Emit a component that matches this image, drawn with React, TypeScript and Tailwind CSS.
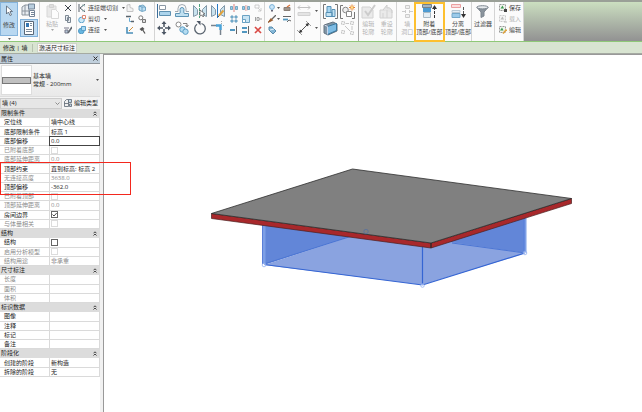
import { ReactNode } from 'react'
import clsx from 'clsx'

interface IconProps {
    w?: number
    h?: number
    faded?: boolean
    children: ReactNode
}

function Icon({ w = 14, h = 14, faded, children }: IconProps) {
    return (
        <svg width={w} height={h} viewBox={`0 0 ${w} ${h}`} fill="none" stroke="#5b6672" className={clsx('shrink-0', faded && 'opacity-35')} aria-hidden="true">
            {children}
        </svg>
    )
}

function Caret() {
    return (
        <svg width="3" height="2" viewBox="0 0 3 2" className="shrink-0" aria-hidden="true">
            <path d="M0 0h3L1.5 2z" fill="#555" />
        </svg>
    )
}

/* large icons, 14px */

const CursorIcon = () => <Icon w={8} h={12}><path d="M1.5 1v8l2-2 1.5 3.5 1.5-.6L5 6.5h2.5z" fill="#fff" stroke="#53606e" strokeWidth=".8" /></Icon>

const TypePropsIcon = () => (
    <Icon w={15} h={15}>
        <path d="M1 4l3-2h4v10H1zM1 8h7M4 2v10" fill="#e8edf2" stroke="#8b949d" />
        <path d="M7.5 1h6v5h-6z" fill="#b9cede" stroke="#758598" />
        <path d="M8.5 7.5h5v6h-5zM10 9.5h3M10 11.5h3" fill="#fff" stroke="#758598" />
    </Icon>
)

const PaletteIcon = () => (
    <Icon w={12} h={14}>
        <path d="M1.5.5h9v13h-9z" fill="#fff" stroke="#586777" />
        <path d="M3 2h3v4H3z" fill="#3476b3" stroke="none" />
        <path d="M7 2.500h2M7 4.500h2M3 8.500h6M3 10.500h6" stroke="#7c8a98" />
    </Icon>
)

const PasteIcon = () => (
    <Icon w={13} h={15} faded>
        <path d="M1 2h9v11H1z" fill="#c8c8c8" stroke="#999" />
        <path d="M3.5.5h4v3h-4z" fill="#aaa" stroke="#888" />
        <path d="M5.5 5.5h4l3 3v6h-7z" fill="#fff" stroke="#999" />
    </Icon>
)

const AlignIcon = () => (
    <Icon>
        <path d="M.5 0v14" stroke="#3c6e99" />
        <path d="M2.5 1.5h6v4h-6z" fill="#fff" stroke="#8b98a5" />
        <path d="M2.5 7.5h11v4h-11z" fill="#acd4ec" stroke="#5e90b0" />
    </Icon>
)

const OffsetIcon = () => (
    <Icon>
        <path d="M.5 9.500h3.500c2 0 1-2 1-4a2 2 0 0 1 4 0c0 2-1 4 1 4h3.500v3H.5z" fill="#bfe0f1" stroke="#5d94b5" />
        <path d="M0 7.500h3V4.500a3.500 3.500 0 0 1 8 0v3h3" stroke="#7d8892" strokeWidth=".7" />
    </Icon>
)

const MirrorPickIcon = () => (
    <Icon>
        <path d="M.5 1.500l4 4v5l-4 2zM13.500 1.500l-4 4v5l4 2z" fill="#c9e2ee" stroke="#8298a8" />
        <path d="M6.500 0v14" stroke="#4ba47d" strokeDasharray="3 1" />
        <path d="M7 6v6l2-1 1 2 1-1-1-2h2z" fill="#fff" stroke="#555" strokeWidth=".7" />
    </Icon>
)

const MirrorDrawIcon = () => (
    <Icon>
        <path d="M.5 1.500l4 4v5l-4 2zM13.500 1.500l-4 4v5l4 2z" fill="#c9e2ee" stroke="#8298a8" />
        <path d="M6.500 0v14" stroke="#2479c4" />
        <path d="M8 11.500l4.500-5" stroke="#e3a33a" strokeWidth="2" />
        <path d="M7 13l1-1.500" stroke="#333" />
    </Icon>
)

const MoveIcon = () => (
    <Icon>
        <path d="M7 2v4M7 8v4M2 7h4M8 7h4" stroke="#4b5563" strokeWidth="1.5" />
        <path d="M7 0l2.500 3h-5zM7 14l2.500-3h-5zM0 7l3-2.500v5zM14 7l-3-2.500v5z" fill="#4b5563" stroke="none" />
    </Icon>
)

const CopyIcon = () => (
    <Icon>
        <circle cx="3.5" cy="3.5" r="2.5" fill="#fff" stroke="#888" />
        <path d="M8 2.500h4v3M10.500 4l1.500 2 1.500-2" stroke="#666" strokeWidth=".8" />
        <circle cx="7.5" cy="8.5" r="2.7" fill="#b5dcf1" stroke="#5d9fc6" />
        <circle cx="10.5" cy="10.7" r="2.7" fill="#b5dcf1" stroke="#5d9fc6" />
    </Icon>
)

const RotateIcon = () => (
    <Icon>
        <path d="M4 3.200A5.300 5.300 0 1 0 8.500 2.500" stroke="#5b6570" strokeWidth="1.3" />
        <path d="M3.500 0h4v4.500z" fill="#4b5563" stroke="none" />
    </Icon>
)

const TrimIcon = () => (
    <Icon>
        <path d="M0 4.500h6M9.500 9v5" stroke="#78838e" strokeWidth="1.5" />
        <path d="M5 4.500h4.500V9" stroke="#4ba3d8" strokeWidth="2.5" />
        <path d="M10.500 0v3M12 4.500h2" stroke="#999" strokeWidth=".8" strokeDasharray="1 1" />
    </Icon>
)

const MeasureIcon = () => (
    <Icon h={12} faded>
        <path d="M1 2.500h12M3 .5l-2 2 2 2M11 .5l2 2-2 2" stroke="#555" />
        <path d="M1 7.500h12v3H1z" fill="#bbb" stroke="#888" />
    </Icon>
)

const DimensionIcon = () => (
    <Icon>
        <path d="M2 12L12 2" stroke="#555" />
        <path d="M0 9l5 5M9 0l5 5" stroke="#888" strokeWidth=".8" />
        <path d="M2 12l1-3.500 2.500 2.500zM12 2l-1 3.500L8.500 3z" fill="#333" stroke="none" />
    </Icon>
)

const AssemblyIcon = () => (
    <Icon w={15} h={15}>
        <path d="M3 .5H.5v14H3M12 .5h2.500v14H12" stroke="#777" />
        <path d="M4 2.500h4v6H4z" fill="#a6d5f1" stroke="#5790b5" />
        <path d="M3 8.500h6v4H3zM9 5.500h3v7H9z" fill="#c3e2f2" stroke="#5790b5" />
    </Icon>
)

const GroupIcon = () => (
    <Icon w={15} h={15}>
        <path d="M3 1.500H.5v13H3M12 14.500h2.500V8" stroke="#777" />
        <circle cx="5.5" cy="6" r="2.8" fill="#eee" stroke="#888" />
        <path d="M6.500 7.500h5v5h-5z" fill="#fff" stroke="#888" />
        <path d="M12 .5v6M9 3.500h6M10 1.500l4 4M14 1.500l-4 4" stroke="#e8802b" />
        <circle cx="12" cy="3.5" r="1.2" fill="#ffe08a" stroke="none" />
    </Icon>
)

const PartsIcon = () => (
    <Icon w={15} h={15}>
        <path d="M1 4l9-3 4 2v7l-9 4-4-2z" fill="#7f95a6" stroke="#65737f" />
        <path d="M4.500 5.500l9-3v7l-9 4z" fill="#7ebce4" stroke="#39789f" />
        <path d="M1.500 4l3 1.500v8" stroke="#eef" strokeWidth=".8" />
    </Icon>
)

const SimilarIcon = () => (
    <Icon w={15} h={15} faded>
        <path d="M1.500.5h3v3h-3zM10.500.5h3v3h-3zM10.500 10.500h3v3h-3zM1.500 9.500h3v3h-3z" fill="#ddd" stroke="#666" strokeDasharray="2 1" />
        <path d="M5.500 2.500H9M5 5l5 5M12 5v4" stroke="#666" />
    </Icon>
)

const EditProfileIcon = () => (
    <Icon w={15} h={15} faded>
        <path d="M1 3h8l3 3v8H1z" fill="#ccc" stroke="#888" />
        <path d="M4 7l3 4 7-10" stroke="#777" strokeWidth="2" />
    </Icon>
)

const ResetProfileIcon = () => (
    <Icon w={15} h={15} faded>
        <path d="M1 6h12v8H1z" fill="#ccc" stroke="#888" />
        <path d="M4 6l4-5v3c3-1 5 1 5 5" fill="#bbb" stroke="#777" />
        <path d="M4 9v5M8 6v8" stroke="#888" />
    </Icon>
)

const OpeningIcon = () => (
    <Icon w={11} h={15} faded>
        <path d="M3.500 1.500h4v3h-4zM3.500 10.500h4v3h-4z" fill="#ddd" stroke="#777" />
        <path d="M0 7.500h3M8 7.500h3M3.500 6v3M7.500 6v3" stroke="#777" />
    </Icon>
)

const AttachIcon = () => (
    <Icon w={15} h={15}>
        <path d="M.5.5h9v3h-9z" fill="#a5b4bf" stroke="#74818c" />
        <path d="M1 4h8v4H1z" fill="#4c9bd2" stroke="none" />
        <path d="M1.500 8.500h7v5h-7z" fill="#e3eef5" stroke="#a9bac5" />
        <path d="M12.500 14V5" stroke="#333" strokeDasharray="3 1" />
        <path d="M12.500 1L15 5h-5z" fill="#333" stroke="none" />
    </Icon>
)

const DetachIcon = () => (
    <Icon w={15} h={15}>
        <path d="M.5.5h9v3h-9z" fill="#fbdede" stroke="#eba0a0" />
        <path d="M1 6.500h8v2H1z" fill="#e2edf5" stroke="#b6c7d3" />
        <path d="M1 9.500h8v4H1z" fill="#9ccbea" stroke="#74a8ca" />
        <path d="M12.500 3v7" stroke="#555" strokeDasharray="3 1" />
        <path d="M12.500 14l2.500-4h-5z" fill="#333" stroke="none" />
    </Icon>
)

const FilterIcon = () => (
    <Icon w={13} h={13}>
        <path d="M1 2.500L5 7v5.500l3-1.500V7l4-4.500z" fill="#8a949d" stroke="#7d868f" />
        <ellipse cx="6.500" cy="2.300" rx="5.700" ry="1.600" fill="#e5e9ec" stroke="#7d868f" />
    </Icon>
)

/* small icons, 8px */

const smallIcons: Record<string, ReactNode> = {
    cut: <path d="M1 1l6 6M7 1L1 7" stroke="#3d434a" />,
    copy: <path d="M1.500.5h3v5h-3zM3.500 2.500h3v5h-3z" fill="#e6ebef" stroke="#7d8894" />,
    match: <><path d="M0 2h5M1 4h3v3H1z" fill="#b5c9d8" stroke="#778" /><path d="M4 7l4-6" stroke="#646b74" strokeWidth="1.600" /></>,
    cope: <><path d="M1 0v8M7 0L2 4l5 4" stroke="#56616b" /><path d="M4 1l3 1M4 7l3-1" stroke="#8aa" /></>,
    cutGeom: <><circle cx="3.500" cy="5" r="2.800" fill="#cde9f7" stroke="#5fa3cb" /><path d="M4.500.5h3v3h-3z" fill="#fff" stroke="#d98872" /></>,
    join: <><circle cx="3.300" cy="5" r="2.800" fill="#65b5e0" stroke="#5199c4" /><path d="M3.500.5h4v4h-4z" fill="#a9d9f2" stroke="#5b9fc8" /></>,
    roof: <path d="M1 1l3-.5v3l3 1v3H1z" fill="#f2f2f2" stroke="#c4c4c4" />,
    cube: <><path d="M1 2l4-1 2.500 2v3.500L4 7.500 1 6z" fill="#bfe0f3" stroke="#5a95b9" strokeWidth=".8" /><path d="M4 3v4M1 2l3 1h3" stroke="#5a95b9" strokeWidth=".8" /></>,
    beam: <><path d="M0 1.500h5M5 6.500h3" stroke="#5a636c" strokeWidth="1.300" /><path d="M3.500 3v3.500H5" stroke="#68abd4" /></>,
    wallJoin: <><circle cx="2.800" cy="2.800" r="2" fill="#fff" stroke="#777" /><path d="M4.500 4.500h3v3h-3z" fill="#ddd" stroke="#777" /></>,
    split: <><path d="M1 1v6h6" stroke="#4a8fb9" strokeWidth="1.600" /><path d="M3 5l4-4" stroke="#cf913f" /></>,
    demolish: <><path d="M1.500 3l3-2 2 2-3 2z" fill="#555" stroke="none" /><path d="M4.500 3.500l2.500 4" stroke="#555" strokeWidth="1.300" /></>,
    splitEl: <><path d="M.5 2.500h2v3h-2zM5.500 2.500h2v3h-2z" fill="#99cceb" stroke="#538fad" strokeWidth=".7" /><path d="M4 0v8" stroke="#df827c" /></>,
    splitGap: <><path d="M.5 2.500h2v3h-2zM5.500 2.500h2v3h-2z" fill="#99cceb" stroke="#538fad" strokeWidth=".7" /><path d="M3.500 1v6M4.800 1v6" stroke="#e19a95" strokeWidth=".6" /></>,
    unpin: <path d="M1 1h4v3H1zM4 4l3 3M7 4v3H4" stroke="#c4c4c4" strokeWidth=".8" />,
    array: <path d="M1 1h2v2H1zM5 1h2v2H5zM1 5h2v2H1zM5 5h2v2H5z" fill="#a8d7ef" stroke="#5a94b8" strokeWidth=".9" />,
    scale: <><path d="M.5.5h7v7h-7z" fill="#c8e4f3" stroke="#6ba2c3" /><path d="M.5 4.500h3v3h-3z" fill="#fff" stroke="#6ba2c3" /></>,
    pin: <path d="M1.500 2v4M3 2.500h2v3H3zM5 4h3" stroke="#999" strokeWidth=".9" />,
    trimOne: <><path d="M0 4h5" stroke="#5197c0" strokeWidth="2" /><path d="M6.500 0v8" stroke="#666" /></>,
    trimMany: <><path d="M0 2h5M0 6h5" stroke="#5197c0" strokeWidth="1.800" /><path d="M6.500 0v8" stroke="#666" /></>,
    remove: <path d="M1 1l6 6M7 1L1 7" stroke="#d94a45" strokeWidth="1.700" />,
    bulb: <><circle cx="4" cy="3" r="2.400" fill="#cbe7fa" stroke="#79b0d8" /><path d="M3 6.800h2" stroke="#667" strokeWidth="1.600" /></>,
    render: <><path d="M1 3.500h6v3H1z" fill="#a0958b" stroke="#887f77" /><path d="M4 3l3-2" stroke="#dd7538" strokeWidth="1.300" /></>,
    brush: <><path d="M4 4l4-4" stroke="#666" strokeWidth="1.300" /><path d="M0 7.500l3-4 1.700 1.700z" fill="#a8642e" stroke="#8a4d20" strokeWidth=".8" /></>,
    lines: <><path d="M0 1.500h8" stroke="#666" /><path d="M0 4.500h5" stroke="#5197c0" strokeWidth="1.800" /><path d="M4 7l2-2 2 1" stroke="#666" /></>,
    linked: <><path d="M1 1h3l4 4-3 3-4-4z" fill="#83b6d6" stroke="#5a8bab" /><path d="M2 4l4-1" stroke="#e4f2fb" /></>,
    save: <><path d="M.5.5h6v6h-6z" fill="#eff4ec" stroke="#999" strokeDasharray="2 1" /><path d="M1.500 4.500l2-3 1.500 3z" fill="#3f9b50" stroke="none" /><path d="M5 5h3v3H5z" fill="#444" stroke="none" /></>,
    load: <><path d="M.5.5h6v6h-6z" fill="#f4f4f4" stroke="#ccc" strokeDasharray="2 1" /><path d="M1.500 4.500l2-3 1.500 3z" fill="#bbb" stroke="none" /><path d="M5 7h3" stroke="#bbb" /></>,
    edit: <><path d="M.5.5h6v6h-6z" fill="#eff4ec" stroke="#999" strokeDasharray="2 1" /><path d="M1 4.500l2-3 1.500 3z" fill="#3f9b50" stroke="none" /><path d="M4 7.500l3.500-4" stroke="#dfa440" strokeWidth="1.600" /></>,
}

function Small({ name }: { name: string }) {
    return <Icon w={8} h={8}>{smallIcons[name]}</Icon>
}

function Tool({ label, children }: { label: string, children: ReactNode }) {
    return <button type="button" aria-label={label} className="flex items-center gap-1">{children}</button>
}

interface BigToolProps {
    icon: ReactNode
    lines: string[]
    disabled?: boolean
    className?: string
}

function BigTool({ icon, lines, disabled, className = 'pt-0.5' }: BigToolProps) {
    return (
        <button type="button" disabled={disabled} className={clsx('flex flex-col items-center whitespace-nowrap', disabled && 'text-[#b4b4b4]', className)}>
            {icon}
            <span className="mt-px">
                {lines.map(line => <span key={line} className="block">{line}</span>)}
            </span>
        </button>
    )
}

function Group({ className, children }: { className: string, children: ReactNode }) {
    return <div className={clsx('flex shrink-0 border-r border-[#d4d4d4] bg-[#fbfbfb]', className)}>{children}</div>
}

const geometry = [
    { icon: 'cope', label: '连接端切割' },
    { icon: 'cutGeom', label: '剪切' },
    { icon: 'join', label: '连接' },
]
const geometryExtra = ['roof', 'cube', 'beam', 'wallJoin', 'split', 'demolish']
const modifyBig = [
    { label: '对齐', icon: <AlignIcon /> },
    { label: '偏移', icon: <OffsetIcon /> },
    { label: '镜像 - 拾取轴', icon: <MirrorPickIcon /> },
    { label: '镜像 - 绘制轴', icon: <MirrorDrawIcon /> },
    { label: '移动', icon: <MoveIcon /> },
    { label: '复制', icon: <CopyIcon /> },
    { label: '旋转', icon: <RotateIcon /> },
    { label: '修剪', icon: <TrimIcon /> },
]
const modifySmall = ['splitEl', 'splitGap', 'unpin', 'array', 'scale', 'pin', 'trimOne', 'trimMany', 'remove']
const selection = [
    { icon: 'save', label: '保存' },
    { icon: 'load', label: '载入', disabled: true },
    { icon: 'edit', label: '编辑' },
]

function Ribbon() {
    return (
        <div className="flex h-[42px] border-t-2 border-b border-t-[#9aa097] border-b-[#8fc878] bg-linear-to-b from-[#cbdfc0] to-[#929292] text-[#444]">
            <Group className="w-10">
                <div className="flex w-[18px] flex-col">
                    <button type="button" className="flex h-[34px] flex-col items-center gap-1 border border-[#86b4dc] bg-[#b9d8f1] pt-0.5">
                        <CursorIcon />
                        修改
                    </button>
                    <button type="button" aria-label="选择" className="flex flex-1 items-center justify-center"><Caret /></button>
                </div>
                <div className="flex flex-1 flex-col items-center gap-px pt-px">
                    <Tool label="类型属性"><TypePropsIcon /></Tool>
                    <button type="button" aria-label="属性" className="flex w-[18px] justify-center border border-[#7fb0da] bg-[#c0dcf3] py-px"><PaletteIcon /></button>
                </div>
            </Group>
            <Group className="w-[37px] justify-between px-1">
                <button type="button" disabled className="flex w-4 flex-col items-center gap-px pt-0.5 whitespace-nowrap text-[#b4b4b4]">
                    <PasteIcon />
                    粘贴
                    <span className="opacity-50"><Caret /></span>
                </button>
                <div className="flex flex-col gap-[3px] pt-0.5">
                    {['cut', 'copy', 'match'].map(name => <Tool key={name} label={name}><Small name={name} /></Tool>)}
                </div>
            </Group>
            <Group className="w-[78px] justify-between pr-2 pl-px">
                <div className="flex flex-col gap-[3px] pt-0.5">
                    {geometry.map(item => (
                        <button type="button" key={item.label} className="flex h-2 items-center gap-0.5 whitespace-nowrap">
                            <Small name={item.icon} />
                            <span className="mr-0.5">{item.label}</span>
                            <Caret />
                        </button>
                    ))}
                </div>
                <div className="grid grid-cols-2 content-start gap-x-1 gap-y-[3px] pt-0.5">
                    {geometryExtra.map(name => <Tool key={name} label={name}><Small name={name} /></Tool>)}
                </div>
            </Group>
            <Group className="w-[110px] justify-between px-0.5">
                <div className="grid grid-cols-4 content-start gap-x-1 gap-y-[3px] pt-0.5">
                    {modifyBig.map(tool => <Tool key={tool.label} label={tool.label}>{tool.icon}</Tool>)}
                </div>
                <div className="grid grid-cols-3 content-start gap-x-1 gap-y-[3px] pt-0.5">
                    {modifySmall.map(name => <Tool key={name} label={name}><Small name={name} /></Tool>)}
                </div>
            </Group>
            <Group className="w-[30px] justify-between px-[3px]">
                <div className="flex flex-col gap-[3px] pt-0.5">
                    <button type="button" aria-label="隐藏" className="flex items-center gap-px"><Small name="bulb" /><Caret /></button>
                    <button type="button" aria-label="替换" className="flex items-center gap-px"><Small name="brush" /><Caret /></button>
                    <Tool label="置换"><Small name="linked" /></Tool>
                </div>
                <div className="flex flex-col gap-[3px] pt-0.5">
                    <Tool label="选择框"><Small name="render" /></Tool>
                    <Tool label="线处理"><Small name="lines" /></Tool>
                </div>
            </Group>
            <Group className="w-[26px] flex-col gap-1 pt-[3px] pl-0.5">
                <Tool label="测量"><MeasureIcon /><Caret /></Tool>
                <Tool label="尺寸标注"><DimensionIcon /><Caret /></Tool>
            </Group>
            <Group className="w-[38px] border-r-[#a8a8a8]">
                <div className="grid grid-cols-2 content-start gap-x-0.5 gap-y-0.5 pt-0.5 pl-0.5">
                    <Tool label="创建部件"><AssemblyIcon /></Tool>
                    <Tool label="创建组"><GroupIcon /></Tool>
                    <Tool label="创建零件"><PartsIcon /></Tool>
                    <Tool label="创建类似"><SimilarIcon /></Tool>
                </div>
            </Group>
            <Group className="w-[38px] justify-around">
                <BigTool icon={<EditProfileIcon />} lines={['编辑', '轮廓']} disabled />
                <BigTool icon={<ResetProfileIcon />} lines={['重设', '轮廓']} disabled />
            </Group>
            <Group className="w-[75px]">
                <BigTool icon={<OpeningIcon />} lines={['墙', '洞口']} disabled className="w-[17px] pt-0.5 pl-1" />
                <BigTool icon={<AttachIcon />} lines={['附着', '顶部/底部']} className="z-10 -mb-px w-8 border-2 border-[#fdc02f]" />
                <BigTool icon={<DetachIcon />} lines={['分离', '顶部/底部']} className="w-[26px] pt-0.5" />
            </Group>
            <Group className="w-[23px] justify-center">
                <BigTool icon={<span className="py-px"><FilterIcon /></span>} lines={['过滤器']} />
            </Group>
            <Group className="w-[29px] flex-col gap-[3px] pt-0.5 pl-1">
                {selection.map(item => (
                    <button type="button" key={item.label} disabled={item.disabled} className="flex h-2 items-center gap-0.5 whitespace-nowrap disabled:text-[#b4b4b4]">
                        <Small name={item.icon} />
                        {item.label}
                    </button>
                ))}
            </Group>
        </div>
    )
}

interface Row {
    label: string
    value?: string
    kind?: 'input' | 'check'
    checked?: boolean
    focused?: boolean
    readOnly?: boolean
}

const sections: { title: string, rows: Row[] }[] = [
    {
        title: '限制条件',
        rows: [
            { label: '定位线', value: '墙中心线' },
            { label: '底部限制条件', value: '标高 1' },
            { label: '底部偏移', value: '0.0', kind: 'input', focused: true },
            { label: '已附着底部', kind: 'check', readOnly: true },
            { label: '底部延伸距离', value: '0.0', readOnly: true },
            { label: '顶部约束', value: '直到标高: 标高 2' },
            { label: '无连接高度', value: '3638.0', readOnly: true },
            { label: '顶部偏移', value: '-362.0', kind: 'input' },
            { label: '已附着顶部', kind: 'check', readOnly: true },
            { label: '顶部延伸距离', value: '0.0', readOnly: true },
            { label: '房间边界', kind: 'check', checked: true },
            { label: '与体量相关', kind: 'check', readOnly: true },
        ],
    },
    {
        title: '结构',
        rows: [
            { label: '结构', kind: 'check' },
            { label: '启用分析模型', kind: 'check', readOnly: true },
            { label: '结构用途', value: '非承重', readOnly: true },
        ],
    },
    {
        title: '尺寸标注',
        rows: [
            { label: '长度', readOnly: true },
            { label: '面积', readOnly: true },
            { label: '体积', readOnly: true },
        ],
    },
    {
        title: '标识数据',
        rows: [
            { label: '图像' },
            { label: '注释', kind: 'input' },
            { label: '标记', kind: 'input' },
            { label: '备注', kind: 'input' },
        ],
    },
    {
        title: '阶段化',
        rows: [
            { label: '创建的阶段', value: '新构造' },
            { label: '拆除的阶段', value: '无' },
        ],
    },
]

function Value({ row, id }: { row: Row, id: string }) {
    if (row.kind === 'check') {
        return (
            <span className="relative ml-px block size-[7px]">
                <input id={id} type="checkbox" defaultChecked={row.checked} disabled={row.readOnly} className="peer block size-[7px] appearance-none border border-[#666] bg-white disabled:border-[#dcdcdc]" />
                <svg viewBox="0 0 7 7" className="pointer-events-none absolute inset-0 hidden peer-checked:block" fill="none" stroke="#333">
                    <path d="M1.5 3.5L3 5l2.700-3" strokeWidth=".9" />
                </svg>
            </span>
        )
    }
    if (row.kind === 'input') {
        return <input id={id} type="text" defaultValue={row.value} className={clsx('block h-2 w-full px-px', row.focused && 'outline outline-[#444]')} />
    }
    return <span className="block px-px">{row.value}</span>
}

function Properties() {
    return (
        <aside className="w-[100px] shrink-0 bg-white">
            <div className="flex h-[10px] items-center justify-between border-b border-[#8d949a] bg-[#c0cfdc] px-px">
                <h2>属性</h2>
                <button type="button" aria-label="关闭" className="p-px">
                    <svg width="5" height="5" viewBox="0 0 5 5" stroke="#333"><path d="M.5.5l4 4M4.500.5l-4 4" /></svg>
                </button>
            </div>
            <button type="button" className="flex h-[33px] w-full items-center border-b border-[#ddd] bg-linear-to-b from-[#f7f7f7] to-[#e9e9e9] px-px text-left">
                <span className="mr-px flex h-[30px] w-[31px] items-center border border-[#ddd] bg-white">
                    <span className="h-[7px] w-full border border-[#777] bg-[#c0c0c0]" />
                </span>
                <span className="flex-1 whitespace-nowrap">
                    <span className="block">基本墙</span>
                    <span className="block">常规 - 200mm</span>
                </span>
                <Caret />
            </button>
            <div className="flex h-3 items-center bg-[#f4f4f4]">
                <div className="relative w-[62px]">
                    <select aria-label="选择的图元" className="block h-[11px] w-full appearance-none border border-[#ccc] bg-[#e6e6e6] px-px">
                        <option>墙 (4)</option>
                    </select>
                    <svg width="5" height="3" viewBox="0 0 5 3" className="pointer-events-none absolute top-1 right-0.5" fill="none" stroke="#777"><path d="M.5.5l2 2 2-2" strokeWidth=".8" /></svg>
                </div>
                <button type="button" className="flex flex-1 items-center justify-center gap-0.5 whitespace-nowrap">
                    <Icon w={8} h={8}><path d="M.5 2.500l2-2h2v7h-4zM.5 4.500h4" fill="#eee" strokeWidth=".8" /><path d="M4.500.5h3v3h-3zM5.500 5h2v2.500h-2z" fill="#c5d9e8" strokeWidth=".8" /></Icon>
                    编辑类型
                </button>
            </div>
            <table className="h-[268px] w-full table-fixed border-separate border-spacing-0">
                <colgroup>
                    <col className="w-[50px]" />
                    <col />
                </colgroup>
                {sections.map((section, s) => (
                    <tbody key={section.title}>
                        <tr className="bg-[#dcdcdc]">
                            <th colSpan={2} scope="colgroup" className="border-b border-[#dcdcdc] p-0 text-left font-normal">
                                <button type="button" className="flex w-full items-center justify-between pr-[3px] pl-px">
                                    {section.title}
                                    <svg width="4" height="5" viewBox="0 0 4 5" fill="none" stroke="#333"><path d="M.5 2.300L2 .8l1.500 1.500M.5 4.500L2 3l1.500 1.500" strokeWidth=".9" /></svg>
                                </button>
                            </th>
                        </tr>
                        {section.rows.map((row, r) => (
                            <tr key={row.label} className={clsx(row.readOnly && 'text-[#8c8c8c]')}>
                                <td className="border-r border-b border-[#dadada] p-0 pl-1 whitespace-nowrap">
                                    <label className="block" htmlFor={row.kind && `prop-${s}-${r}`}>{row.label}</label>
                                </td>
                                <td className="border-r border-b border-[#dadada] p-0 whitespace-nowrap">
                                    <Value row={row} id={`prop-${s}-${r}`} />
                                </td>
                            </tr>
                        ))}
                    </tbody>
                ))}
            </table>
        </aside>
    )
}

function Model() {
    return (
        <svg viewBox="104 55 538 357" preserveAspectRatio="xMinYMin meet" className="block w-full" role="img" aria-label="三维视图">
            {/* walls */}
            <g strokeLinejoin="round">
                <path d="M263 224l90 12-89 29z" fill="#6286d8" />
                <path d="M440 241l86-28v40l-76-10z" fill="#6286d8" />
                <path d="M264 265l88-29 71 10v39z" fill="#8aa3e0" />
                <path d="M422 246l28-4 76 11-104 32z" fill="#8aa3e0" />
                <path d="M264 264l88-28M452 243l73 10" stroke="#4c76d4" />
                <path d="M264 225v39M525 216v37" stroke="#7d9fe6" strokeWidth="3" />
                <path d="M262.500 225v39M524 216v37" stroke="#3f6bd1" strokeWidth=".8" />
                <path d="M264 264.500l158.500 20.500L525 253M422.500 246v39" fill="none" stroke="#3565d3" strokeWidth="1.200" />
                <g fill="#fff" fillOpacity=".5" stroke="#86a8ef" strokeWidth=".7">
                    <circle cx="264" cy="265" r="1.800" />
                    <circle cx="422.500" cy="285.500" r="1.800" />
                    <circle cx="525" cy="253" r="1.800" />
                </g>
            </g>
            {/* roof slab */}
            <path d="M211.500 213.500L431 243v5L211.500 218.500zM431 243l140.500-44.500v5L431 248z" fill="#a8282b" stroke="#4a1f20" strokeWidth=".7" />
            <path d="M211.500 213.500L352.500 169l219 29.500L431 243z" fill="#808080" stroke="#2d2d2d" strokeWidth=".8" />
            <path d="M431 243v5" stroke="#2d2d2d" strokeWidth=".8" />
            <circle cx="366" cy="231.500" r="2.200" fill="none" stroke="#536f9f" strokeWidth=".7" />
        </svg>
    )
}

export default function App() {
    return (
        <div className="flex min-h-screen flex-col bg-white font-['Open_Sans','Noto_Sans_CJK_SC',sans-serif] text-[6px] leading-[8px] text-[#222]">
            <Ribbon />
            <div className="flex h-3 items-center border-b border-[#a5aaa2] bg-[#d8e4d1] pl-[3px]">
                <span className="w-[30px] border-r border-[#b7c2b0] whitespace-nowrap">修改 | 墙</span>
                <button type="button" className="ml-1 h-[10px] border border-[#cdd3ca] bg-[#f7f7f7] px-px whitespace-nowrap">激活尺寸标注</button>
            </div>
            <div className="relative flex flex-1 bg-[#f1f1f1]">
                <Properties />
                <main className="ml-[3px] flex-1 border-t border-l border-[#999] bg-white">
                    <Model />
                </main>
                {/* highlight around the top constraint rows */}
                <div className="pointer-events-none absolute top-[108px] left-0 h-[33px] w-[131px] border border-[#f3281e]" />
            </div>
        </div>
    )
}
